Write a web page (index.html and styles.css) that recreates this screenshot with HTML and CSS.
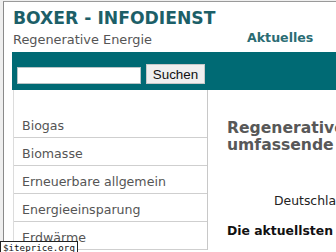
FILE: index.html
```html
<!DOCTYPE html>
<html lang="de">
<head>
    <meta charset="UTF-8">
    <meta name="viewport" content="width=device-width, initial-scale=1.0">
    <title>Boxer - Infodienst: Regenerative Energie</title>
    <link rel="stylesheet" href="styles.css">
</head>
<body>
    <div class="page">
        <div class="header">
            <div class="brand">
                <div class="title">BOXER - INFODIENST</div>
                <div class="subtitle">Regenerative Energie</div>
            </div>
            <div class="nav">
                <a href="#" class="nav-item">Aktuelles</a>
            </div>
        </div>

        <div class="search-bar">
            <input type="text" class="search-input">
            <button class="search-button">Suchen</button>
        </div>

        <div class="main">
            <div class="sidebar">
                <a href="#" class="menu-item">Biogas</a>
                <a href="#" class="menu-item">Biomasse</a>
                <a href="#" class="menu-item">Erneuerbare allgemein</a>
                <a href="#" class="menu-item">Energieeinsparung</a>
                <a href="#" class="menu-item">Erdwärme</a>
            </div>

            <div class="content">
                <h1>
                    <span class="line">Regenerative Energien:</span>
                    <span class="line">umfassende Informationen</span>
                </h1>
                <p class="intro">Deutschlands Nachrichtendienst</p>
                <h2>Die aktuellsten Meldungen</h2>
            </div>
        </div>
    </div>

    <div class="siteprice">$iteprice.org</div>
</body>
</html>
```

FILE: styles.css
```css
html, body {
    overflow: hidden;
}

body {
    margin: 0;
    padding: 1px 0 0 3px;
    background: #efefef;
    font-family: "DejaVu Sans", Verdana, sans-serif;
    height: 251px;
}

.page {
    width: 760px;
    background: #fff;
    border-left: 1px solid #8a8a8a;
    border-top: 1px solid #9a9a9a;
    padding-left: 8px;
    height: 100%;
}

.header {
    display: flex;
    height: 50px;
}

.brand {
    width: 234px;
    padding-top: 6px;
    padding-left: 1px;
}

.title {
    font-size: 17.2px;
    line-height: 20px;
    font-weight: bold;
    color: #1c5f68;
}

.subtitle {
    margin-top: 4px;
    font-size: 12.9px;
    line-height: 15px;
    color: #555;
}

.nav {
    display: flex;
    gap: 22px;
    padding-top: 28px;
}

.nav-item {
    font-size: 12.6px;
    line-height: 15px;
    font-weight: bold;
    color: #2b6c74;
    text-decoration: none;
}

.search-bar {
    display: flex;
    align-items: flex-end;
    gap: 5px;
    height: 38px;
    box-sizing: border-box;
    padding: 0 0 6px 5px;
    background: #006a74;
}

.search-input {
    width: 124px;
    height: 17px;
    box-sizing: border-box;
    border: 1px solid #b8c4c6;
    background: #fff;
    padding: 0 2px;
    margin: 0;
}

.search-button {
    width: 59px;
    height: 20px;
    box-sizing: border-box;
    margin: 0;
    padding: 0;
    border: 1px solid #c8c8c8;
    background: #efefef;
    font-family: "Liberation Sans", Arial, sans-serif;
    font-size: 13.4px;
    color: #111;
}

.main {
    display: flex;
}

.sidebar {
    width: 193px;
    margin-left: 1px;
    padding-top: 20px;
    border-left: 1px solid #dcdcdc;
    border-right: 1px solid #c8c8c8;
    display: flex;
    flex-direction: column;
}

.menu-item {
    padding: 4px 0 0 8px;
    line-height: 23px;
    font-size: 12.6px;
    color: #555;
    text-decoration: none;
    border-bottom: 1px solid #cfcfcf;
    white-space: nowrap;
}

.content {
    width: 400px;
    padding: 30px 0 0 19px;
}

.content h1 {
    margin: 0;
    font-size: 15.6px;
    line-height: 17px;
    font-weight: bold;
    color: #585858;
}

.content h1 .line {
    display: block;
    white-space: nowrap;
}

.content .intro {
    margin: 39px 0 0 0;
    padding-left: 47px;
    font-size: 12.4px;
    line-height: 15px;
    color: #222;
    white-space: nowrap;
}

.content h2 {
    margin: 15px 0 0 0;
    font-size: 12.4px;
    line-height: 15px;
    font-weight: bold;
    color: #111;
    white-space: nowrap;
}

.siteprice {
    position: absolute;
    left: 0;
    bottom: 0;
    width: 74px;
    height: 10px;
    border: 1px solid #222;
    border-bottom: 0;
    background: #fff;
    font-family: "DejaVu Sans Mono", monospace;
    font-size: 9.2px;
    line-height: 11px;
    padding-left: 2px;
    color: #111;
}
```
